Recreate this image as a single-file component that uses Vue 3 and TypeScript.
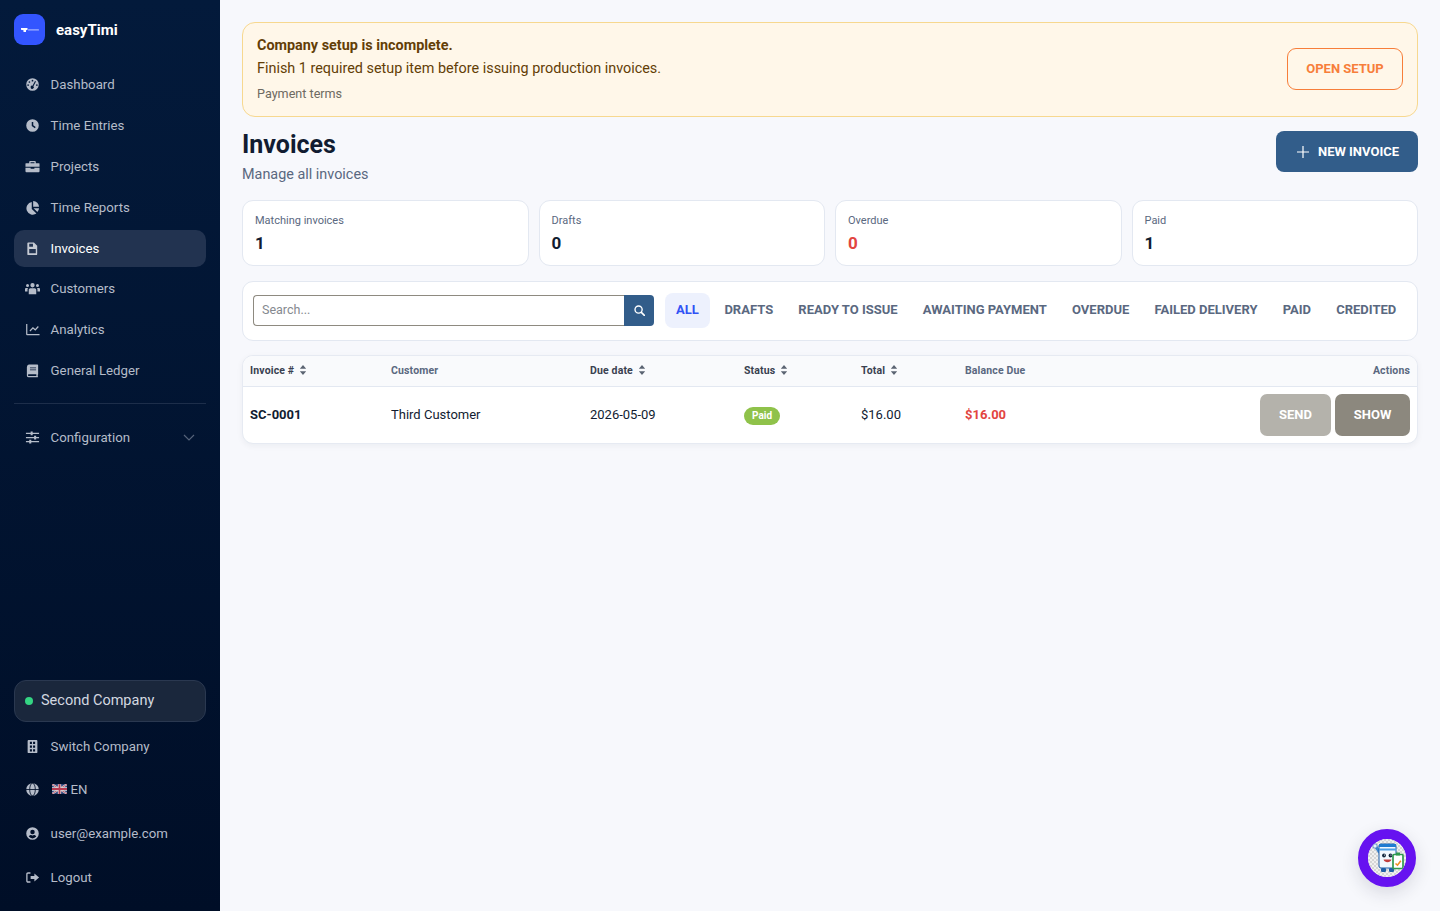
<script setup lang="ts">
interface NavItem {
  label: string
  icon: string
  active?: boolean
}

// icon paths are all drawn on a 16x16 box
const icons: Record<string, string> = {
  dashboard:
    'M8 1.3a6.7 6.7 0 1 0 0 13.4A6.7 6.7 0 0 0 8 1.3zM8 3a.9.9 0 1 1 0 1.8A.9.9 0 0 1 8 3zM4.7 4.4a.9.9 0 1 1 0 1.8.9.9 0 0 1 0-1.8zM3.3 7.7a.9.9 0 1 1 0 1.8.9.9 0 0 1 0-1.8zm9.4 0a.9.9 0 1 1 0 1.8.9.9 0 0 1 0-1.8zm-2-3.5 1 .6-2.7 5a1.7 1.7 0 1 1-1-.6z',
  clock: 'M8 1.3a6.7 6.7 0 1 0 0 13.4A6.7 6.7 0 0 0 8 1.3zm.8 3v3.4l2.6 1.9-.9 1.3L7.2 8.5V4.3z',
  briefcase:
    'M5.5 2h5c.6 0 1 .4 1 1v1.5H15c.3 0 .5.2.5.5v3.3H.5V5c0-.3.2-.5.5-.5h3.5V3c0-.6.4-1 1-1zm.4 1.4v1.1h4.2V3.4zM.5 9.2H6v1.3h4V9.2h5.5V13c0 .6-.4 1-1 1h-13c-.6 0-1-.4-1-1z',
  chart:
    'M7.2 2.2v7.3l5 5A6.8 6.8 0 1 1 7.2 2.2zM8.700 1A6.500 6.500 0 0 1 15 7.300H8.700zM9.200 8.800H15a6.500 6.500 0 0 1-1.800 4z',
  invoice:
    'M3.500 1.500h6L13 5v9c0 .6-.4 1-1 1H3.500c-.6 0-1-.4-1-1V2.500c0-.6.4-1 1-1zm1 1.500v3h4V3zm0 5.500v4.500h7V8.500z',
  users:
    'M8 2.200a2.300 2.300 0 1 1 0 4.600 2.300 2.300 0 0 1 0-4.600zM2.700 3.200a1.600 1.600 0 1 1 0 3.200 1.600 1.600 0 0 1 0-3.200zm10.600 0a1.600 1.600 0 1 1 0 3.200 1.600 1.600 0 0 1 0-3.200zM5.800 7.700h4.400c1 0 1.800.8 1.800 1.800V14H4V9.500c0-1 .8-1.800 1.800-1.800zM1.200 7.400h2c-.3.500-.5 1.100-.5 1.700v2.100H0V8.600c0-.7.500-1.200 1.200-1.200zm11.600 0h2c.7 0 1.200.5 1.200 1.200v2.600h-2.700V9.100c0-.6-.2-1.200-.5-1.700z',
  analytics:
    'M1.200 2h1.300v10.700h13V14H2.200c-.6 0-1-.4-1-1zM13.700 4.300l1 .9-3.700 4-2.500-2-2.800 2.800-.9-.9 3.600-3.700 2.500 2z',
  book: 'M4 1.500h9.200c.4 0 .8.400.8.800V12c0 .3-.2.500-.4.600v1.600c.2.200.4.300.4.500 0 .3-.2.500-.5.500H4a2 2 0 0 1-2-2V4.500a3 3 0 0 1 2-3zm1.300 3.200v.9h6.500v-.9zm0 2.100v.9h6.500v-.9zM4 12a.9.9 0 1 0 0 1.800h8.100V12z',
  building:
    'M3.800 1h8.400c.6 0 1 .4 1 1v12c0 .6-.4 1-1 1H3.800c-.6 0-1-.4-1-1V2c0-.6.4-1 1-1zm1.400 2v2.200h2.200V3zm3.400 0v2.200h2.200V3zM5.200 7v2.200h2.200V7zm3.400 0v2.200h2.200V7zM5.200 11v2.200h2.200V11zm3.400 0v2.200h2.200V11z',
  user: 'M8 1.300a6.700 6.700 0 1 0 0 13.400A6.700 6.700 0 0 0 8 1.300zm0 2.600a2.400 2.400 0 1 1 0 4.800 2.400 2.400 0 0 1 0-4.800zm0 9.300a5.200 5.200 0 0 1-4-1.900c.5-1 1.500-1.600 2.600-1.600.1 0 .3 0 .4.100.3.100.7.200 1 .2s.7-.1 1-.2c.1-.1.300-.1.400-.1 1.100 0 2.100.6 2.600 1.600a5.200 5.200 0 0 1-4 1.900z',
  logout:
    'M5.800 2.500v1.400H3.200c-.3 0-.5.200-.5.500v7.200c0 .3.200.5.500.5h2.600v1.400H3.200c-1.100 0-1.900-.8-1.900-1.900V4.400c0-1.100.8-1.900 1.900-1.900zM10 3.800 15 8l-5 4.200V9.700H6V6.300h4z',
  sliders:
    'M1 2.900h14v1.300H1zM6 1.500h2.200v4H6zM1 7.400h14v1.300H1zM9.700 6h2.200v4H9.700zM1 11.800h14v1.300H1zM4.500 10.500h2.200v4H4.500z',
}

const navItems: NavItem[] = [
  { label: 'Dashboard', icon: 'dashboard' },
  { label: 'Time Entries', icon: 'clock' },
  { label: 'Projects', icon: 'briefcase' },
  { label: 'Time Reports', icon: 'chart' },
  { label: 'Invoices', icon: 'invoice', active: true },
  { label: 'Customers', icon: 'users' },
  { label: 'Analytics', icon: 'analytics' },
  { label: 'General Ledger', icon: 'book' },
]

const stats = [
  { label: 'Matching invoices', value: 1 },
  { label: 'Drafts', value: 0 },
  { label: 'Overdue', value: 0, danger: true },
  { label: 'Paid', value: 1 },
]

const tabs = ['All', 'Drafts', 'Ready to issue', 'Awaiting payment', 'Overdue', 'Failed delivery', 'Paid', 'Credited']
</script>

<template>
  <div class="layout">
    <aside class="sidebar">
      <div class="brand">
        <div class="brand-logo">
          <svg width="18" height="6" viewBox="0 0 18 6">
            <path d="M0 1h6.500v1.800L5 3.300V5H2.500V3.300L0 2.800z" fill="#fff" />
            <rect x="7" y="2.200" width="11" height="1.400" rx=".5" fill="#fff" opacity=".55" />
          </svg>
        </div>
        <span class="brand-name">easyTimi</span>
      </div>

      <nav class="nav">
        <a v-for="item in navItems" :key="item.label" class="nav-item" :class="{ active: item.active }">
          <svg class="nav-icon" viewBox="0 0 16 16"><path :d="icons[item.icon]" fill="currentColor" fill-rule="evenodd" /></svg>
          <span>{{ item.label }}</span>
        </a>
        <div class="nav-divider"></div>
        <a class="nav-item">
          <svg class="nav-icon" viewBox="0 0 16 16"><path :d="icons.sliders" fill="currentColor" /></svg>
          <span>Configuration</span>
          <svg class="chevron" viewBox="0 0 12 7"><path d="M1 1l5 5 5-5" fill="none" stroke="currentColor" stroke-width="1.200" /></svg>
        </a>
      </nav>

      <div class="sidebar-bottom">
        <div class="company">
          <span class="company-dot"></span>
          <span>Second Company</span>
        </div>
        <a class="nav-item low first">
          <svg class="nav-icon" viewBox="0 0 16 16"><path :d="icons.building" fill="currentColor" fill-rule="evenodd" /></svg>
          <span>Switch Company</span>
        </a>
        <a class="nav-item low">
          <svg class="nav-icon" viewBox="0 0 16 16">
            <circle cx="8" cy="8" r="6.700" fill="currentColor" />
            <ellipse cx="8" cy="8" rx="3" ry="6.700" fill="none" stroke="#010f28" stroke-width=".9" />
            <path d="M1 8h14" stroke="#010f28" stroke-width=".9" />
          </svg>
          <span class="lang">
            <svg class="flag" viewBox="0 0 20 13">
              <rect width="20" height="13" fill="#33487f" />
              <path d="M0 0l20 13M20 0L0 13" stroke="#ddd" stroke-width="2.600" />
              <path d="M0 0l20 13M20 0L0 13" stroke="#b83a50" stroke-width="1" />
              <path d="M10 0v13M0 6.500h20" stroke="#ddd" stroke-width="4.400" />
              <path d="M10 0v13M0 6.500h20" stroke="#b83a50" stroke-width="2.400" />
            </svg>
            EN
          </span>
        </a>
        <a class="nav-item low">
          <svg class="nav-icon" viewBox="0 0 16 16"><path :d="icons.user" fill="currentColor" fill-rule="evenodd" /></svg>
          <span>user@example.com</span>
        </a>
        <a class="nav-item low">
          <svg class="nav-icon" viewBox="0 0 16 16"><path :d="icons.logout" fill="currentColor" /></svg>
          <span>Logout</span>
        </a>
      </div>
    </aside>

    <main class="main">
      <section class="setup-alert">
        <div class="alert-body">
          <div class="alert-title">Company setup is incomplete.</div>
          <div class="alert-text">Finish 1 required setup item before issuing production invoices.</div>
          <div class="alert-item">Payment terms</div>
        </div>
        <button class="open-setup">OPEN SETUP</button>
      </section>

      <header class="page-head">
        <div>
          <h1>Invoices</h1>
          <p>Manage all invoices</p>
        </div>
        <button class="new-invoice">
          <svg width="12" height="12" viewBox="0 0 12 12"><path d="M6 0v12M0 6h12" stroke="#fff" stroke-width="1.200" /></svg>
          NEW INVOICE
        </button>
      </header>

      <section class="stats">
        <div v-for="s in stats" :key="s.label" class="stat">
          <div class="stat-label">{{ s.label }}</div>
          <div class="stat-value" :class="{ danger: s.danger }">{{ s.value }}</div>
        </div>
      </section>

      <section class="filters">
        <div class="search">
          <input type="text" placeholder="Search..." />
          <button class="search-btn" aria-label="Search">
            <svg width="11" height="11" viewBox="0 0 12 12">
              <circle cx="5" cy="5" r="3.900" fill="none" stroke="#fff" stroke-width="1.500" />
              <path d="M8 8l3.300 3.300" stroke="#fff" stroke-width="1.700" stroke-linecap="round" />
            </svg>
          </button>
        </div>
        <div class="tabs">
          <span v-for="(t, i) in tabs" :key="t" class="tab" :class="{ current: i === 0 }">{{ t }}</span>
        </div>
      </section>

      <section class="table-card">
        <table>
          <colgroup>
            <col class="col-number" />
            <col class="col-customer" />
            <col class="col-date" />
            <col class="col-status" />
            <col class="col-total" />
            <col class="col-balance" />
            <col />
          </colgroup>
          <thead>
            <tr>
              <th class="sortable">Invoice #<svg class="sort" viewBox="0 0 8 11"><path d="M4 0l3.500 4.200h-7zM4 11L.5 6.800h7z" /></svg></th>
              <th>Customer</th>
              <th class="sortable">Due date<svg class="sort" viewBox="0 0 8 11"><path d="M4 0l3.500 4.200h-7zM4 11L.5 6.800h7z" /></svg></th>
              <th class="sortable">Status<svg class="sort" viewBox="0 0 8 11"><path d="M4 0l3.500 4.200h-7zM4 11L.5 6.800h7z" /></svg></th>
              <th class="sortable">Total<svg class="sort" viewBox="0 0 8 11"><path d="M4 0l3.500 4.200h-7zM4 11L.5 6.800h7z" /></svg></th>
              <th>Balance Due</th>
              <th class="right">Actions</th>
            </tr>
          </thead>
          <tbody>
            <tr>
              <td class="strong">SC-0001</td>
              <td>Third Customer</td>
              <td>2026-05-09</td>
              <td class="status-cell"><span class="badge">Paid</span></td>
              <td>$16.00</td>
              <td class="due">$16.00</td>
              <td class="right actions">
                <button class="act send">SEND</button>
                <button class="act show">SHOW</button>
              </td>
            </tr>
          </tbody>
        </table>
      </section>
    </main>

    <button class="assistant" aria-label="Assistant">
      <svg width="38" height="38" viewBox="0 0 38 38">
        <defs>
          <pattern id="checker" width="4" height="4" patternUnits="userSpaceOnUse">
            <rect width="4" height="4" fill="#f0f0f0" />
            <rect width="2" height="2" fill="#d6d6d6" />
            <rect x="2" y="2" width="2" height="2" fill="#d6d6d6" />
          </pattern>
        </defs>
        <circle cx="19" cy="19" r="19" fill="url(#checker)" />
        <path d="M6 7.500l2.500-1.500 4 6-2 2.500z" fill="#3d86cf" />
        <circle cx="7" cy="7" r="2.200" fill="#e9f2fb" stroke="#2f6fb5" stroke-width=".7" />
        <rect x="11" y="5" width="17" height="24" rx="2" fill="#f2f8fe" stroke="#1f5fa8" stroke-width="1" />
        <rect x="11" y="5" width="17" height="3" fill="#1f7bd1" />
        <rect x="11" y="9.500" width="17" height="2" fill="#4d9fe6" />
        <circle cx="16" cy="16.500" r="1.900" fill="#14283f" />
        <circle cx="22.500" cy="16.500" r="1.900" fill="#14283f" />
        <circle cx="16.500" cy="16" r=".6" fill="#fff" />
        <circle cx="23" cy="16" r=".6" fill="#fff" />
        <path d="M15.500 20.500c1 3.500 7 3.500 8 0z" fill="#c23f3f" />
        <rect x="13" y="29" width="5" height="4" rx="1.200" fill="#1f5fa8" />
        <rect x="21" y="29" width="5" height="4" rx="1.200" fill="#1f5fa8" />
        <rect x="25" y="15.500" width="10" height="14" rx="1" fill="#fff" stroke="#2f9a4e" stroke-width="1.700" />
        <rect x="28" y="13.500" width="4" height="3" fill="#2f9a4e" />
        <path d="M27.500 24.500l2 1.700 3.300-4.500" fill="none" stroke="#ef8f22" stroke-width="1.600" />
      </svg>
    </button>
  </div>
</template>

<style>
html,
body {
  margin: 0;
  background: #f7f8fc;
}
</style>

<style scoped>
.layout {
  display: flex;
  min-height: 911px;
  font-family: Roboto, 'Liberation Sans', sans-serif;
  color: #111c31;
  background: #f7f8fc;
}

.sidebar {
  width: 220px;
  height: 911px;
  flex-shrink: 0;
  box-sizing: border-box;
  padding: 14px 14px 12px;
  display: flex;
  flex-direction: column;
  background: linear-gradient(180deg, #031a3b 0%, #000e27 100%);
}

.brand {
  display: flex;
  align-items: center;
  gap: 11px;
  height: 31px;
  margin-bottom: 21.400px;
}

.brand-logo {
  width: 31px;
  height: 31px;
  border-radius: 9px;
  background: #3355ff;
  display: flex;
  align-items: center;
  justify-content: center;
}

.brand-name {
  color: #fff;
  font-size: 15px;
  font-weight: 700;
}

.nav {
  display: flex;
  flex-direction: column;
  gap: 3.800px;
}

.nav-item {
  height: 37px;
  display: flex;
  align-items: center;
  gap: 10.600px;
  padding: 0 11px;
  border-radius: 10px;
  font-size: 13.250px;
  color: #b5bcc9;
}

.nav-item.active {
  background: #223350;
  color: #fff;
}

.nav-item.active .nav-icon {
  color: #c5cad3;
}

.nav-icon {
  width: 15px;
  height: 15px;
  flex-shrink: 0;
}

.nav-divider {
  height: 1px;
  margin: 10.500px 0 10.500px;
  background: #1d2e4a;
}

.chevron {
  width: 12px;
  height: 7px;
  margin-left: auto;
  color: #56637a;
}

.sidebar-bottom {
  margin-top: auto;
  display: flex;
  flex-direction: column;
}

.company {
  height: 42px;
  box-sizing: border-box;
  display: flex;
  align-items: center;
  gap: 8px;
  padding: 0 10px 1px;
  border: 1px solid #2a3850;
  border-radius: 12px;
  background: #1a273c;
  font-size: 14.500px;
  color: #d3d8e0;
}

.company-dot {
  width: 8px;
  height: 8px;
  border-radius: 50%;
  background: #34d583;
}

.nav-item.low {
  height: 43.700px;
}

.nav-item.low.first {
  margin-top: 2px;
}

.lang {
  display: flex;
  align-items: center;
  gap: 4px;
}

.flag {
  width: 15px;
  height: 10px;
  margin-left: 1px;
  margin-top: -2px;
}

.main {
  flex: 1;
  min-width: 0;
  padding: 22px 22px 0;
}

.setup-alert {
  height: 95px;
  box-sizing: border-box;
  display: flex;
  align-items: center;
  justify-content: space-between;
  padding: 0 14px 1px;
  border: 1px solid #f7d88f;
  border-radius: 13px;
  background: #fff7e9;
}

.alert-body {
  padding-top: 1px;
}

.alert-title {
  font-size: 14.400px;
  font-weight: 700;
  color: #633e06;
  line-height: 20px;
}

.alert-text {
  margin-top: 3px;
  font-size: 14.400px;
  color: #633e06;
  line-height: 20px;
}

.alert-item {
  margin-top: 6px;
  font-size: 12.600px;
  color: #6e6a62;
  line-height: 18px;
}

.open-setup {
  width: 116px;
  height: 42px;
  padding: 0 0 2px;
  border: 1px solid #f77e3a;
  border-radius: 9px;
  background: transparent;
  color: #f77e3a;
  font: 700 13px Roboto, sans-serif;
}

.page-head {
  display: flex;
  justify-content: space-between;
  align-items: flex-start;
  margin-top: 14px;
}

h1 {
  margin: 0;
  font-size: 25px;
  line-height: 28px;
  font-weight: 700;
  color: #111c31;
}

.page-head p {
  margin: 5px 0 0;
  font-size: 14.400px;
  line-height: 22px;
  color: #5a6880;
}

.new-invoice {
  width: 142px;
  height: 41px;
  padding: 0 0 0 2px;
  border: 0;
  border-radius: 8px;
  background: #325d8a;
  color: #fff;
  font: 700 13px Roboto, sans-serif;
  display: flex;
  align-items: center;
  justify-content: center;
  gap: 9px;
}

.stats {
  display: grid;
  grid-template-columns: repeat(4, 1fr);
  gap: 10px;
  margin-top: 14px;
}

.stat {
  height: 66px;
  box-sizing: border-box;
  padding: 12px 12px 0;
  border: 1px solid #e3e8f1;
  border-radius: 11px;
  background: #fff;
}

.stat-label {
  font-size: 11px;
  line-height: 15px;
  color: #5a6880;
}

.stat-value {
  margin-top: 4px;
  font-size: 17px;
  font-weight: 700;
  line-height: 22px;
  color: #111c31;
}

.stat-value.danger {
  color: #e2453f;
}

.filters {
  height: 60px;
  box-sizing: border-box;
  margin-top: 15px;
  padding: 0 10px 2px;
  display: flex;
  align-items: center;
  gap: 11px;
  border: 1px solid #e3e8f1;
  border-radius: 11px;
  background: #fff;
}

.search {
  width: 401px;
  height: 31px;
  flex-shrink: 0;
  display: flex;
}

.search input {
  flex: 1;
  min-width: 0;
  box-sizing: border-box;
  padding: 0 8px 2px;
  border: 1px solid #8e8a80;
  border-right: 0;
  border-radius: 4px 0 0 4px;
  font: 12.500px Roboto, sans-serif;
  outline: none;
}

.search input::placeholder {
  color: #85898f;
}

.search-btn {
  width: 30px;
  border: 0;
  padding: 0;
  border-radius: 0 4px 4px 0;
  background: #325d8a;
  display: flex;
  align-items: center;
  justify-content: center;
}

.tabs {
  display: flex;
  align-items: center;
}

.tab {
  height: 35px;
  box-sizing: border-box;
  display: flex;
  align-items: center;
  padding: 0 12.600px 2px;
  border-radius: 8px;
  font-size: 13px;
  font-weight: 700;
  text-transform: uppercase;
  white-space: nowrap;
  color: #5a6880;
}

.tab.current {
  margin-right: 2px;
  padding: 0 11px 2px;
  background: #edf1fd;
  color: #3152f5;
}

.table-card {
  margin-top: 14px;
  border: 1px solid #e6eaf2;
  border-radius: 11px;
  background: #fff;
  overflow: hidden;
  box-shadow: 0 2px 6px rgba(20, 30, 50, 0.05);
}

table {
  width: 100%;
  border-collapse: collapse;
  table-layout: fixed;
}

.col-number {
  width: 141px;
}

.col-customer {
  width: 199px;
}

.col-date {
  width: 154px;
}

.col-status {
  width: 117px;
}

.col-total {
  width: 104px;
}

.col-balance {
  width: 150px;
}

th {
  height: 28px;
  padding: 0 7px 2px;
  border-bottom: 1px solid #e3e8f1;
  background: #f9fafc;
  font-size: 10.500px;
  font-weight: 700;
  letter-spacing: 0.15px;
  text-align: left;
  color: #5a6880;
  white-space: nowrap;
}

th.right {
  text-align: right;
}

th.sortable {
  color: #3a4150;
}

.sort {
  width: 8px;
  height: 10px;
  margin-left: 5px;
  vertical-align: -1.500px;
  fill: #5b6472;
}

td {
  height: 54px;
  padding: 0 7px 2px;
  font-size: 13px;
  color: #111c31;
}

td.strong {
  font-weight: 700;
}

td.due {
  font-weight: 700;
  color: #e2453f;
}

td.status-cell {
  padding: 2px 7px 0;
}

.right {
  text-align: right;
}

.badge {
  display: inline-block;
  padding: 0 8px;
  border-radius: 9px;
  background: #8fc24a;
  color: #fff;
  font-size: 10px;
  font-weight: 700;
  line-height: 18px;
  vertical-align: middle;
}

.actions {
  padding-bottom: 0;
  white-space: nowrap;
  font-size: 0;
}

.act {
  height: 42px;
  padding: 0 0 2px;
  border: 0;
  border-radius: 7px;
  color: #fff;
  font: 700 13px Roboto, sans-serif;
  vertical-align: middle;
}

.send {
  width: 71px;
  margin-right: 4px;
  background: #b4b2ab;
}

.show {
  width: 75px;
  background: #8c887e;
}

.assistant {
  position: fixed;
  left: 1358px;
  top: 829px;
  width: 58px;
  height: 58px;
  padding: 0;
  box-sizing: border-box;
  border: 10px solid #6612f0;
  border-radius: 50%;
  background: #eee;
  display: flex;
  align-items: center;
  justify-content: center;
  overflow: hidden;
  box-shadow: 0 6px 18px rgba(30, 30, 60, 0.14);
}
</style>
